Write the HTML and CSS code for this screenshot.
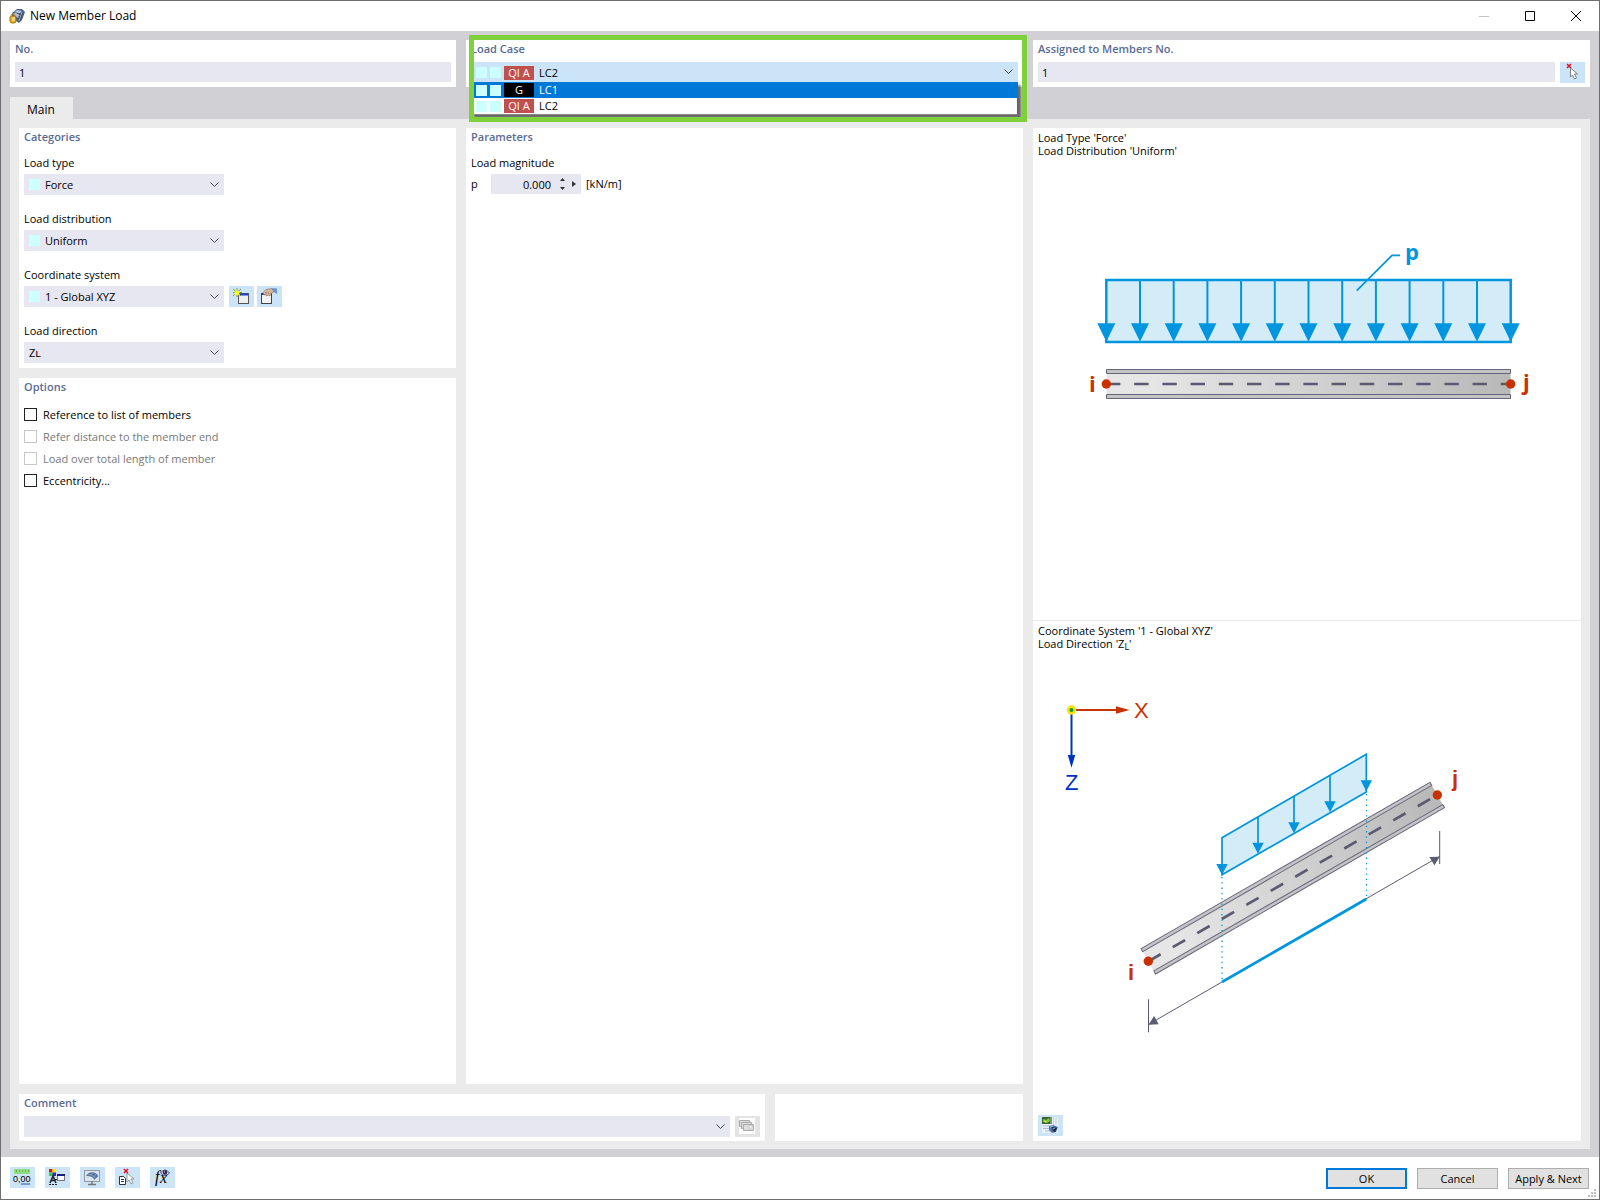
FILE: index.html
```html
<!DOCTYPE html>
<html lang="en">
<head>
    <meta charset="UTF-8">
    <meta name="viewport" content="width=device-width, initial-scale=1.0">
    <title>New Member Load</title>
    <link rel="stylesheet" href="styles.css">
</head>
<body>
    <div class="window">
        <header class="titlebar">
            <svg class="app-icon" viewBox="0 0 16 16">
                <path d="M3 5l5-4 5 0 3 3-3 8-3 3-7-5z" fill="#4a5f86"/>
                <path d="M5 4l4-2 4 1-3 2zM4 6l2-1 4 2-1 3z" fill="#a9bddb"/>
                <path d="M10 6l4-2-2 7-2 2z" fill="#2c3a55"/>
                <path d="M7 3l5 2M6 5l5 3M13 4l-3 9" stroke="#d5deed" stroke-width=".7" fill="none"/>
                <path d="M2 8V7q2-3 4 0v1" fill="none" stroke="#c79a22"/>
                <rect x="1" y="8" width="6" height="7" rx="2" fill="#e2b02c" stroke="#9b7412"/>
                <path d="M3 10h3M3 12h3" stroke="#fff0b0"/>
            </svg>
            <h1>New Member Load</h1>
            <div class="window-buttons">
                <button type="button" aria-label="Minimize" disabled><svg viewBox="0 0 10 10"><path d="M0 5.5h10" stroke="#c4c4c4"/></svg></button>
                <button type="button" aria-label="Maximize"><svg viewBox="0 0 10 10"><path d="M.5 .5h9v9h-9z" fill="none" stroke="#000"/></svg></button>
                <button type="button" aria-label="Close"><svg viewBox="0 0 10 10"><path d="M0 0l10 10M10 0L0 10" stroke="#000"/></svg></button>
            </div>
        </header>

        <main class="content">
            <div class="top-row">
                <section class="panel">
                    <h2><label for="loadNo">No.</label></h2>
                    <input class="field" type="text" id="loadNo" value="1">
                </section>

                <section class="panel load-case">
                    <h2><label for="loadCase">Load Case</label></h2>
                    <div class="combo combo-case">
                        <select id="loadCase">
                            <option>LC2</option>
                            <option>LC1</option>
                        </select>
                        <span class="case-mark"><i class="swatch"></i><i class="swatch"></i><span class="badge">QI A</span></span>
                        <svg class="chevron" viewBox="0 0 9 6"><path d="M.5 .5l4 4 4-4"/></svg>
                        <ul class="case-list" role="listbox" aria-label="Load Case">
                            <li role="option" aria-selected="true" class="active"><i class="swatch"></i><i class="swatch"></i><span class="badge badge-g">G</span>LC1</li>
                            <li role="option" aria-selected="false"><i class="swatch"></i><i class="swatch"></i><span class="badge">QI A</span>LC2</li>
                        </ul>
                    </div>
                    <div class="highlight"></div>
                </section>

                <section class="panel">
                    <h2><label for="members">Assigned to Members No.</label></h2>
                    <div class="field-row">
                        <input class="field" type="text" id="members" value="1">
                        <button type="button" class="icon-btn" aria-label="Select members">
                            <svg viewBox="0 0 16 16">
                                <path d="M3 0l4 4M7 0L3 4" stroke="#e01020" stroke-width="1.5"/>
                                <path d="M6.5 4v9l2-2 2 4 2-1-2-4h3z" fill="#fff" stroke="#777" stroke-width=".9"/>
                            </svg>
                        </button>
                    </div>
                </section>
            </div>

            <div class="tabs" role="tablist">
                <button type="button" role="tab" aria-selected="true" class="tab">Main</button>
            </div>

            <div class="tab-page">
                <div class="work-area">
                    <div class="columns">
                        <div class="left-column">
                            <section class="panel">
                                <h2>Categories</h2>
                                <div class="form-group">
                                    <label for="loadType">Load type</label>
                                    <div class="combo">
                                        <select id="loadType" class="with-swatch"><option>Force</option></select>
                                        <i class="swatch"></i>
                                        <svg class="chevron" viewBox="0 0 9 6"><path d="M.5 .5l4 4 4-4"/></svg>
                                    </div>
                                </div>
                                <div class="form-group">
                                    <label for="loadDistribution">Load distribution</label>
                                    <div class="combo">
                                        <select id="loadDistribution" class="with-swatch"><option>Uniform</option></select>
                                        <i class="swatch"></i>
                                        <svg class="chevron" viewBox="0 0 9 6"><path d="M.5 .5l4 4 4-4"/></svg>
                                    </div>
                                </div>
                                <div class="form-group">
                                    <label for="coordSystem">Coordinate system</label>
                                    <div class="combo-row">
                                        <div class="combo">
                                            <select id="coordSystem" class="with-swatch"><option>1 - Global XYZ</option></select>
                                            <i class="swatch"></i>
                                            <svg class="chevron" viewBox="0 0 9 6"><path d="M.5 .5l4 4 4-4"/></svg>
                                        </div>
                                        <div class="combo-buttons">
                                            <button type="button" class="icon-btn" aria-label="New coordinate system">
                                                <svg viewBox="0 0 16 16">
                                                    <rect x="5.5" y="5.5" width="10" height="10" fill="#eee" stroke="#555"/>
                                                    <path d="M6 6.5h9" stroke="#1c3fd8" stroke-width="2"/>
                                                    <path d="M4 0v9M0 1l8 7M8 1L0 8M0 4.5h9" stroke="#5f7a20" stroke-width=".8"/>
                                                    <path d="M4 1l1 2.5h3L6 5l1 3-3-1.5L1.5 8 2 5 .5 3.5H3z" fill="#ffff20"/>
                                                </svg>
                                            </button>
                                            <button type="button" class="icon-btn" aria-label="Edit coordinate system">
                                                <svg viewBox="0 0 16 16">
                                                    <rect x=".5" y="5.5" width="10" height="10" fill="#f2f2f2" stroke="#444"/>
                                                    <path d="M0 6h4" stroke="#223a90" stroke-width="2"/>
                                                    <path d="M2 4.500l3-3 6-1 2 3-3 2-1 2.500-2-1-1.500 1L5 6.500 3 7z" fill="#d8b49a" stroke="#94745e" stroke-width=".7"/>
                                                    <path d="M7 4l1 2M5 4v2" stroke="#94745e" stroke-width=".7"/>
                                                    <path d="M11 0l5 .5V6l-4-2.500z" fill="#6a92d4"/>
                                                </svg>
                                            </button>
                                        </div>
                                    </div>
                                </div>
                                <div class="form-group">
                                    <label for="loadDirection">Load direction</label>
                                    <div class="combo">
                                        <select id="loadDirection"><option>Zʟ</option></select>
                                        <svg class="chevron" viewBox="0 0 9 6"><path d="M.5 .5l4 4 4-4"/></svg>
                                    </div>
                                </div>
                            </section>

                            <section class="panel options">
                                <h2>Options</h2>
                                <label class="check"><input type="checkbox">Reference to list of members</label>
                                <label class="check off"><input type="checkbox" disabled>Refer distance to the member end</label>
                                <label class="check off"><input type="checkbox" disabled>Load over total length of member</label>
                                <label class="check"><input type="checkbox">Eccentricity...</label>
                            </section>
                        </div>

                        <section class="panel parameters">
                            <h2>Parameters</h2>
                            <div class="form-group">
                                <span>Load magnitude</span>
                                <div class="magnitude">
                                    <label for="magnitude">p</label>
                                    <div class="spin">
                                        <input type="text" id="magnitude" value="0.000">
                                        <div class="spin-buttons">
                                            <button type="button" aria-label="Increase"><svg viewBox="0 0 5 3"><path d="M0 3L2.5 0 5 3z"/></svg></button>
                                            <button type="button" aria-label="Decrease"><svg viewBox="0 0 5 3"><path d="M0 0l2.5 3L5 0z"/></svg></button>
                                        </div>
                                        <button type="button" class="more" aria-label="More"><svg viewBox="0 0 4 6"><path d="M0 0l4 3-4 3z"/></svg></button>
                                    </div>
                                    <span>[kN/m]</span>
                                </div>
                            </div>
                        </section>
                    </div>

                    <div class="comment-row">
                        <section class="panel comment">
                            <h2><label for="comment">Comment</label></h2>
                            <div class="combo-row">
                                <div class="combo combo-wide">
                                    <select id="comment"><option></option></select>
                                    <svg class="chevron" viewBox="0 0 9 6"><path d="M.5 .5l4 4 4-4"/></svg>
                                </div>
                                <button type="button" class="icon-btn muted" aria-label="Comment templates" disabled>
                                    <svg viewBox="0 0 16 16">
                                        <path fill="#fff" d="M0 0h16v16H0z"/>
                                        <g fill="#ddd" stroke="#aaa">
                                            <path d="M.5 2.500h10v6H.5z"/>
                                            <path d="M2.500 4.500h10v6h-10z"/>
                                            <path d="M4.500 6.500h10v6h-10z"/>
                                        </g>
                                        <path d="M10 8h4l-3 4z" fill="#fff" stroke="#aaa" stroke-width=".5"/>
                                    </svg>
                                </button>
                            </div>
                        </section>
                        <section class="panel blank"></section>
                    </div>
                </div>

                <aside class="preview">
                    <figure>
                        <figcaption>Load Type 'Force'<br>Load Distribution 'Uniform'</figcaption>
                        <svg class="diagram" viewBox="1033 158 548 462">
                            <defs>
                                <linearGradient id="steel" x1="0" y1="0" x2="1" y2="0">
                                    <stop offset="0.1" stop-color="#e6e6e6"/>
                                    <stop offset="1" stop-color="#b8b8b8"/>
                                </linearGradient>
                            </defs>
                            <!-- uniform load -->
                            <rect x="1106.3" y="280" width="404.4" height="62" fill="#d4ebf8" stroke="#0096df" stroke-width="2.5"/>
                            <path d="M1140 280v50M1173.700 280v50M1207.400 280v50M1241.100 280v50M1274.800 280v50M1308.500 280v50M1342.200 280v50M1375.900 280v50M1409.600 280v50M1443.300 280v50M1477 280v50" stroke="#0096df" stroke-width="2"/>
                            <path d="M1097.300 323.300h18l-9 18.500zM1131 323.300h18l-9 18.500zM1164.700 323.300h18l-9 18.500zM1198.400 323.300h18l-9 18.500zM1232.100 323.300h18l-9 18.500zM1265.800 323.300h18l-9 18.500zM1299.500 323.300h18l-9 18.500zM1333.200 323.300h18l-9 18.500zM1366.900 323.300h18l-9 18.500zM1400.600 323.300h18l-9 18.500zM1434.300 323.300h18l-9 18.500zM1468 323.300h18l-9 18.500zM1501.700 323.300h18l-9 18.500z" fill="#0096df"/>
                            <path d="M1356.700 290.700l35.300-35.400h8" fill="none" stroke="#0096df" stroke-width="1.700"/>
                            <text class="mark load" x="1405" y="260">p</text>
                            <!-- member -->
                            <rect x="1106.5" y="370" width="404" height="28" fill="url(#steel)"/>
                            <path d="M1106.500 369.500h404v4h-404zM1106.500 394.500h404v4h-404z" fill="#c4c4c6" stroke="#66667a"/>
                            <path d="M1106 384h404" stroke="#5a5a70" stroke-width="2.5" stroke-dasharray="14.400 13.800"/>
                            <circle cx="1106.3" cy="384" r="4.7" fill="#c83200"/>
                            <circle cx="1510.7" cy="384" r="4.7" fill="#c83200"/>
                            <text class="mark node" x="1089" y="392">i</text>
                            <text class="mark node" x="1523" y="390">j</text>
                        </svg>
                    </figure>
                    <figure class="second">
                        <figcaption>Coordinate System '1 - Global XYZ'<br>Load Direction 'Z<sub>L</sub>'</figcaption>
                        <svg class="diagram" viewBox="1033 651 548 464">
                            <!-- axes -->
                            <path d="M1071 710h46" stroke="#c83200" stroke-width="2"/>
                            <path d="M1116 706.300l13.500 3.700-13.500 3.700z" fill="#c83200"/>
                            <path d="M1071.500 710v46" stroke="#0032c0" stroke-width="2"/>
                            <path d="M1067.800 755h7.400l-3.700 12.700z" fill="#0032c0"/>
                            <circle cx="1071.5" cy="710" r="4.7" fill="#ffe000"/>
                            <circle cx="1071.5" cy="710" r="2" fill="#00a04a"/>
                            <text class="axis axis-x" x="1134" y="718">X</text>
                            <text class="axis axis-z" x="1065" y="790">Z</text>
                            <!-- load -->
                            <path d="M1222 837.700l144.300-83.400v37.700l-144.300 82.700z" fill="#d4ebf8" stroke="#0096df" stroke-width="1.7"/>
                            <path d="M1258 817v32M1294 796v32M1330 775.300v32" stroke="#0096df" stroke-width="1.7"/>
                            <path d="M1216.300 864h11.400l-5.700 11zM1252.300 842.700h11.400l-5.700 11zM1288.300 822.300h11.400l-5.700 11zM1324.300 801.300h11.400l-5.700 11zM1360.600 780.300h11.400l-5.700 11z" fill="#0096df"/>
                            <!-- member -->
                            <g transform="translate(1148.3 961.3) rotate(-29.92)">
                                <rect x="0" y="-14.6" width="333.4" height="29.2" fill="url(#steel)"/>
                                <path d="M0-14.600h333.400v3.500H0zM0 11.100h333.400v3.500H0z" fill="#c4c4c6" stroke="#66667a"/>
                                <path d="M0 0h333.400" stroke="#5a5a70" stroke-width="2.7" stroke-dasharray="14.200 14.060"/>
                            </g>
                            <circle cx="1148.3" cy="961.3" r="4.7" fill="#c83200"/>
                            <circle cx="1437.3" cy="795" r="4.7" fill="#c83200"/>
                            <text class="node-sans" x="1128" y="980">i</text>
                            <text class="node-sans" x="1452" y="786">j</text>
                            <!-- projection -->
                            <path d="M1222 877v105M1366.500 794v105" stroke="#0096df" stroke-width="1.3" stroke-dasharray="1.300 4"/>
                            <path d="M1148.700 1024.300l291-168" stroke="#5a5a70"/>
                            <path d="M1148.500 999.300v33M1439.700 831v33" stroke="#5a5a70"/>
                            <path d="M1148.700 1024.700l5.300-8.700 4.700 8.300zM1439.700 856.700l-10.300.3 5 8.300z" fill="#5a5a70"/>
                            <path d="M1222 982l144.300-83" stroke="#0096df" stroke-width="2.7"/>
                        </svg>
                        <div class="preview-tools">
                            <button type="button" class="icon-btn" aria-label="Switch picture">
                                <svg viewBox="0 0 16 16">
                                    <path d="M0 0h16v16H0z" fill="#e9f1f6"/>
                                    <path d="M0 0h8v7H0z" fill="#3a6534"/>
                                    <path d="M1 2l3 1 3-2 1 3-3 2-4-1z" fill="#84c83c"/>
                                    <path d="M2 4l2 1" stroke="#ffe030"/>
                                    <path d="M8 0h2v7H8z" fill="#6f9678"/>
                                    <path d="M11.500 0v8M14 0v8" stroke="#bdd0c2"/>
                                    <path d="M1 9h7M1 11.500h7M3 14h5" stroke="#a9bfd6"/>
                                    <path d="M7 9l4-1 5 2-2 5-4 1-3-3z" fill="#4f74ab"/>
                                    <path d="M10 10l5 1-2 4-2-1z" fill="#17243f"/>
                                    <path d="M8 10l3-1M11 12l2-1" stroke="#9db9e2"/>
                                </svg>
                            </button>
                        </div>
                    </figure>
                </aside>
            </div>
        </main>

        <footer class="footer">
            <div class="tools">
                <button type="button" class="icon-btn" aria-label="Units and decimal places">
                    <svg viewBox="0 0 16 16">
                        <rect width="16" height="5" fill="#8edb80"/>
                        <path d="M2.500 1v2M5.500 1v2M8.500 1v2M11.500 1v2M14.500 1v2" stroke="#6cb860"/>
                        <text class="tool-text" x="-1" y="13">0,00</text>
                        <path d="M7 15h9" stroke="#1c4f9c"/>
                    </svg>
                </button>
                <button type="button" class="icon-btn" aria-label="Display settings">
                    <svg viewBox="0 0 16 16">
                        <path d="M0 0h3.500v3.500H0z" fill="#e01818"/><path d="M3.500 0H7v3.500H3.500z" fill="#ffe600"/>
                        <path d="M0 3.500h3.500V7H0z" fill="#22dd22"/><path d="M3.500 3.500H7V7H3.500z" fill="#4420d0"/>
                        <path d="M1 14l3-7 3 7M2 11.500h4" fill="none" stroke="#222" stroke-width="1.5"/>
                        <path d="M0 15.500h8" stroke="#222" stroke-dasharray="2 1"/>
                        <path d="M6 10.500h2" stroke="#222"/>
                        <rect x="8.5" y="6.5" width="7" height="5" fill="#fff" stroke="#777"/>
                        <path d="M8 6h8" stroke="#1c1c80" stroke-width="2"/>
                    </svg>
                </button>
                <button type="button" class="icon-btn" aria-label="Graphic view">
                    <svg viewBox="0 0 16 16">
                        <rect x=".5" y="1.5" width="15" height="11" fill="#d8e6f2" stroke="#999"/>
                        <path d="M2 7q3-5 8-3.500 4 1.500 4 4L10 11q0-4-8-4z" fill="#50749e"/>
                        <path d="M4 6q4-2 7 3M9 3.500l-2 3M12 5l-2 3" fill="none" stroke="#8fabc9" stroke-width=".8"/>
                        <path d="M8 12v3M4 15.500h8" stroke="#777" stroke-width="1.5"/>
                    </svg>
                </button>
                <button type="button" class="icon-btn" aria-label="Delete selection">
                    <svg viewBox="0 0 16 16">
                        <path d="M.5 7.500h4l2 2v6h-6z" fill="#fff" stroke="#333"/>
                        <path d="M2 10.500h3M2 12.500h3" stroke="#333"/>
                        <path d="M8 4v9l2-2 2 4 2-1-2-4h3z" fill="#fff" stroke="#888" stroke-width=".8"/>
                        <path d="M5 0l4 4M9 0L5 4" stroke="#e01020" stroke-width="1.5"/>
                    </svg>
                </button>
                <button type="button" class="icon-btn" aria-label="Formula">
                    <svg viewBox="0 0 16 16">
                        <text class="formula" x="1" y="13">f</text>
                        <text class="formula" x="6" y="14">x</text>
                        <path d="M6.500 4q4.500-6 9 0-4.500 5-9 0z" fill="#d9d6ee" stroke="#2b2760" stroke-width=".8"/>
                        <circle cx="11" cy="3.5" r="2.2" fill="#2b2760"/>
                        <circle cx="10.5" cy="3" r=".6" fill="#fff"/>
                    </svg>
                </button>
            </div>
            <div class="actions">
                <button type="submit" class="btn btn-default">OK</button>
                <button type="button" class="btn">Cancel</button>
                <button type="button" class="btn">Apply &amp; Next</button>
            </div>
            <svg class="grip" viewBox="0 0 8 8"><path d="M6 0h2v2H6zM3 3h2v2H3zM6 3h2v2H6zM0 6h2v2H0zM3 6h2v2H3zM6 6h2v2H6z" fill="#bfbfbf"/></svg>
        </footer>
    </div>
</body>
</html>
```
FILE: styles.css
```css
* {
    margin: 0;
    padding: 0;
    box-sizing: border-box;
}

body {
    background: #fff;
    color: #000;
    font-family: "Open Sans", "DejaVu Sans", sans-serif;
    font-size: 11px;
    line-height: 14px;
}

button,
input,
select {
    font: inherit;
    color: inherit;
    border: none;
    border-radius: 0;
    background: none;
}

svg {
    display: block;
}

.window {
    min-height: 100vh;
    display: flex;
    flex-direction: column;
    border: 1px solid #6e6e70;
}

/* title bar */
.titlebar {
    display: flex;
    align-items: center;
    height: 30px;
    padding-left: 8px;
}

.app-icon {
    width: 16px;
    height: 16px;
    margin-right: 5px;
}

.titlebar h1 {
    font-size: 12px;
    font-weight: 400;
}

.window-buttons {
    display: flex;
    margin-left: auto;
}

.window-buttons button {
    width: 46px;
    height: 30px;
    display: flex;
    align-items: center;
    justify-content: center;
}

.window-buttons svg {
    width: 10px;
    height: 10px;
}

/* panels */
.content {
    flex: 1;
    display: flex;
    flex-direction: column;
    padding: 9px 9px 8px;
    background: #d1d0d5;
}

.top-row {
    display: grid;
    grid-template-columns: 446fr 557fr 557fr;
    gap: 10px;
}

.panel {
    background: #fff;
    padding: 2px 5px 5px;
}

.panel h2 {
    font-size: 11px;
    font-weight: 600;
    line-height: 14px;
    color: #5a6b94;
}

.top-row h2,
.comment h2 {
    margin-bottom: 6px;
}

.field {
    display: block;
    width: 100%;
    height: 20px;
    padding: 0 4px;
    background: #e7e7f2;
}

.field-row {
    display: flex;
    gap: 5px;
    height: 20px;
}

.field-row .field {
    flex: 1;
}

.icon-btn {
    flex: none;
    width: 25px;
    height: 21px;
    padding: 2px 4px 3px;
    background: #cce4f7;
}

.icon-btn svg {
    width: 16px;
    height: 16px;
    overflow: visible;
}

.icon-btn.muted {
    background: #e4e4e4;
}

/* combo boxes: arrow and swatch share the cell of the select */
.combo {
    display: grid;
    grid-template-columns: 100%;
    align-items: center;
    width: 200px;
    height: 21px;
    background: #e7e7f2;
}

.combo > * {
    grid-area: 1 / 1;
}

.combo select {
    appearance: none;
    width: 100%;
    height: 20px;
    padding: 0 20px 0 5px;
}

.combo select.with-swatch {
    padding-left: 21px;
}

.combo > .swatch {
    margin-left: 5px;
}

.combo-wide {
    flex: 1;
}

.combo-row {
    display: flex;
    gap: 5px;
}

.combo-buttons {
    display: flex;
    gap: 3px;
}

.swatch {
    width: 11px;
    height: 11px;
    background: #ccffff;
    pointer-events: none;
}

.chevron {
    justify-self: end;
    width: 9px;
    height: 6px;
    margin-right: 5px;
    fill: none;
    stroke: #444;
    pointer-events: none;
}

/* load case */
.load-case,
.combo-case {
    position: relative;
}

.combo-case {
    width: 100%;
    height: 20px;
    background: #cce4f7;
}

.combo-case select {
    padding-top: 2px;
    padding-left: 68px;
}

.case-mark {
    display: flex;
    align-items: center;
    padding-top: 1px;
    padding-left: 5px;
    pointer-events: none;
}

.case-mark .swatch,
.case-list .swatch {
    margin-right: 3px;
}

.badge {
    width: 30px;
    height: 14px;
    background: #c0504d;
    color: #fff;
    text-align: center;
}

.badge-g {
    background: #000;
}

.case-list {
    position: absolute;
    top: 20px;
    left: 0;
    right: 0;
    list-style: none;
    background: #fff;
    border-right: 1px solid #0078d7;
    border-bottom: 1px solid #888;
    box-shadow: 3px 3px 2px rgba(0, 0, 0, 0.5);
}

.case-list li {
    display: flex;
    align-items: center;
    height: 16px;
    padding-left: 5px;
}

.case-list .badge {
    margin-right: 5px;
}

.case-list .active {
    background: #0078d7;
    color: #fff;
}

.highlight {
    position: absolute;
    top: -5px;
    left: 3px;
    right: -4px;
    height: 87px;
    border: 5px solid #7fd13b;
    pointer-events: none;
}

/* tabs */
.tabs {
    padding-top: 10px;
}

.tab {
    display: block;
    height: 22px;
    padding: 4px 18px 0 17px;
    background: #ebebeb;
    font-size: 12px;
}

.tab-page {
    flex: 1;
    display: grid;
    grid-template-columns: 1004fr 548fr;
    gap: 10px;
    padding: 9px 9px 8px;
    background: #ebebeb;
}

.work-area {
    display: flex;
    flex-direction: column;
    gap: 10px;
}

.columns {
    flex: 1;
    display: grid;
    grid-template-columns: 437fr 557fr;
    gap: 10px;
}

.left-column {
    display: flex;
    flex-direction: column;
    gap: 10px;
}

.form-group {
    padding-top: 12px;
}

.form-group + .form-group {
    padding-top: 17px;
}

.form-group > label,
.form-group > span {
    display: block;
    margin-bottom: 4px;
}

.options {
    flex: 1;
}

.options h2 {
    margin-bottom: 10px;
}

.check {
    display: flex;
    align-items: center;
    width: fit-content;
    height: 22px;
    padding-bottom: 1px;
}

.check input {
    appearance: none;
    width: 13px;
    height: 13px;
    margin-right: 6px;
    border: 1px solid #222;
    background: #fff;
}

.check.off {
    color: #787878;
}

.check.off input {
    border-color: #c8c8c8;
}

.magnitude {
    display: flex;
    align-items: center;
    gap: 5px;
}

.magnitude label {
    width: 15px;
}

.spin {
    display: flex;
    align-items: center;
    width: 90px;
    height: 20px;
    background: #e7e7f2;
}

.spin input {
    width: 60px;
    height: 20px;
    text-align: right;
}

.spin-buttons {
    display: flex;
    flex-direction: column;
    gap: 6px;
    margin: 0 7px 0 9px;
}

.spin-buttons svg {
    width: 5px;
    height: 3px;
}

.spin svg {
    fill: #333;
}

.more svg {
    width: 4px;
    height: 6px;
}

.comment-row {
    display: grid;
    grid-template-columns: 746fr 248fr;
    gap: 10px;
}

.comment {
    padding-bottom: 4px;
}

/* preview */
.preview {
    display: flex;
    flex-direction: column;
    background: #fff;
}

.preview figure {
    padding-top: 3px;
}

.preview .second {
    flex: 1;
    display: flex;
    flex-direction: column;
    border-top: 1px solid #ebebeb;
}

.preview figcaption {
    padding: 0 5px 1px;
    line-height: 13px;
}

.preview sub {
    font-size: 9px;
    line-height: 0;
    vertical-align: -2px;
}

.diagram {
    width: 100%;
}

.preview-tools {
    margin-top: auto;
    padding: 0 5px 5px;
}

.mark {
    font-size: 22px;
    font-weight: 700;
}

.load {
    fill: #0096df;
}

.node,
.node-sans,
.axis-x {
    fill: #c83200;
}

.axis,
.node-sans {
    font-family: "Liberation Sans", Arial, sans-serif;
    font-size: 22px;
}

.node-sans {
    font-weight: 700;
}

.axis-z {
    fill: #0032c0;
}

/* footer */
.footer {
    display: flex;
    justify-content: space-between;
    align-items: flex-start;
    position: relative;
    height: 42px;
    padding: 10px 10px 0 9px;
}

.tools,
.actions {
    display: flex;
    gap: 10px;
}

.actions {
    padding-top: 1px;
}

.btn {
    width: 81px;
    height: 21px;
    background: #e1e1e1;
    border: 1px solid #adadad;
}

.btn-default {
    border: 2px solid #0078d7;
}

.grip {
    position: absolute;
    right: 3px;
    bottom: 2px;
    width: 8px;
    height: 8px;
}

.tool-text {
    font-family: "Liberation Sans", Arial, sans-serif;
    font-size: 9px;
}

.formula {
    font-family: "Liberation Serif", "Times New Roman", serif;
    font-size: 16px;
    font-style: italic;
}
```
